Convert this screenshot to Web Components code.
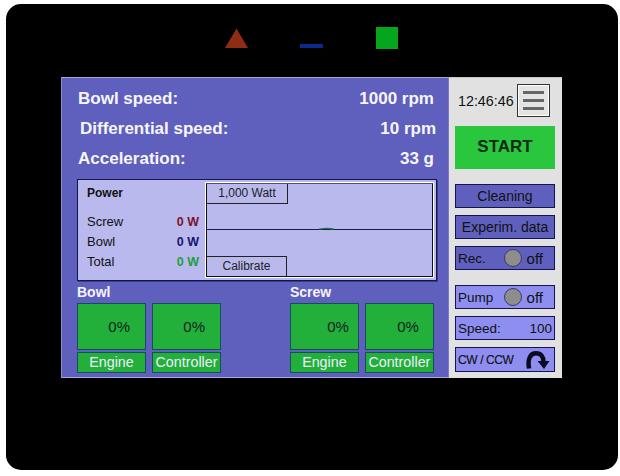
<!DOCTYPE html>
<html><head><meta charset="utf-8"><style>
html,body{margin:0;padding:0;background:#fff;overflow:hidden;font-family:"Liberation Sans",Arial,sans-serif}
</style></head><body>
<hmi-device>
  <hmi-led slot="leds" shape="triangle"></hmi-led>
  <hmi-led slot="leds" shape="dash"></hmi-led>
  <hmi-led slot="leds" shape="square"></hmi-led>
  <hmi-readout style="--l:16px;--r:14px;--h:30px" label="Bowl speed:" value="1000 rpm"></hmi-readout>
  <hmi-readout style="--l:18px;--r:12px;--h:30px" label="Differential speed:" value="10 rpm"></hmi-readout>
  <hmi-readout style="--l:16px;--r:14px;--h:30px" label="Acceleration:" value="33 g"></hmi-readout>
  <hmi-power></hmi-power>
  <hmi-group slot="groups" title="Bowl" pad="15" pad2="15" style="--gx:15px;--w:199px"></hmi-group>
  <hmi-group slot="groups" title="Screw" pad="9" pad2="14" style="--gx:15px;--w:159px"></hmi-group>
  <hmi-side slot="side"></hmi-side>
</hmi-device>
<script>
function def(name,css,html){
  customElements.define(name,class extends HTMLElement{
    connectedCallback(){
      if(this.shadowRoot)return;
      const r=this.attachShadow({mode:"open"});
      r.innerHTML="<style>"+css+"</style>"+html;
    }
  });
}
def("hmi-device",`
:host{display:block;box-sizing:border-box;width:612px;height:466px;margin:4px 0 6px 6px;background:#000;border-radius:15px;color:#fff;font-family:"Liberation Sans",Arial,sans-serif}
.leds{display:flex;height:73px;box-sizing:border-box;padding:23px 0 0 219px;align-items:flex-start}
.screen{display:flex;margin-left:55px;width:501px;height:301px;background:#e1e1e1;box-shadow:inset 0 1px 0 #c8c8c8}
.main{width:388px;box-sizing:border-box;background:#5f5fbd;padding-top:6px;border-top:1px solid #a9a9d6;border-left:1px solid #8d8dd0;border-bottom:1px solid #a9a9d6;border-right:1px solid #7a7ac0}
.groups{display:flex}
`,`<div class="leds"><slot name="leds"></slot></div>
<div class="screen"><div class="main"><slot></slot><div class="groups"><slot name="groups"></slot></div></div><slot name="side"></slot></div>`);

customElements.define("hmi-led",class extends HTMLElement{
  connectedCallback(){
    if(this.shadowRoot)return;
    const s=this.getAttribute("shape");
    const svg={triangle:'<svg width="75" height="23" viewBox="0 0 75 23"><path d="M11.500 1.500L23 21H0Z" fill="#8f2c14"/></svg>',
      dash:'<svg width="76" height="23" viewBox="0 0 76 23"><rect y="17" width="23" height="4" fill="#0c2a8c"/></svg>',
      square:'<svg width="23" height="23" viewBox="0 0 23 23"><rect width="22" height="22" fill="#06a51e"/></svg>'}[s];
    this.attachShadow({mode:"open"}).innerHTML='<style>:host{display:block;line-height:0}</style>'+svg;
  }
});

customElements.define("hmi-readout",class extends HTMLElement{
  connectedCallback(){
    if(this.shadowRoot)return;
    this.attachShadow({mode:"open"}).innerHTML=`<style>
:host{display:flex;justify-content:space-between;align-items:center;height:var(--h);padding:0 var(--r) 0 var(--l);font:bold 17px "Liberation Sans",Arial,sans-serif;color:#f6f6fb}
</style><span>${this.getAttribute("label")}</span><span>${this.getAttribute("value")}</span>`;
  }
});

def("hmi-power",`
:host{display:flex;box-sizing:border-box;width:360px;height:102px;margin:5px 0 0 15px;background:#b9b9ee;border:1px solid #14144e;box-shadow:1px 1px 0 #3c3c84;color:#111;font:13px "Liberation Sans",Arial,sans-serif;padding:3px}
.list{width:125px;box-sizing:border-box;padding:3px 7px 0 6px}
.t{font:bold 12px "Liberation Sans",Arial,sans-serif;height:22px;line-height:14px;margin-bottom:4px}
.r{display:flex;justify-content:space-between;height:20px;line-height:20px}
.r b{font-size:12.500px}
.chart{position:relative;flex:1;box-sizing:border-box;border:1px solid #111;border-top-color:#555;outline:1px solid #fff;display:flex;flex-direction:column;justify-content:space-between;align-items:flex-start}
.btn{box-sizing:border-box;width:81px;height:20px;line-height:19px;text-align:center;font-size:12px;border:1px solid #222;border-left:0;color:#222}
.top{border-top:0}.bot{border-bottom:0;width:80px}
svg{position:absolute;left:0;top:42px}
`,`<div class="list"><div class="t">Power</div>
<div class="r"><span>Screw</span><b style="color:#7d1426">0 W</b></div>
<div class="r"><span>Bowl</span><b style="color:#15156e">0 W</b></div>
<div class="r"><span>Total</span><b style="color:#1f9e42">0 W</b></div></div>
<div class="chart"><div class="btn top">1,000 Watt</div>
<svg width="226" height="6" viewBox="0 0 226 6"><path d="M0 3.500H226" stroke="#1a1a50"/><path d="M112 3.200Q120 1.600 127 3.200" stroke="#1d7a55" stroke-width="1.200" fill="none"/></svg>
<div class="btn bot">Calibrate</div></div>`);

customElements.define("hmi-group",class extends HTMLElement{
  connectedCallback(){
    if(this.shadowRoot)return;
    const pad=this.getAttribute("pad"),pad2=this.getAttribute("pad2");
    this.attachShadow({mode:"open"}).innerHTML=`<style>
:host{display:block;box-sizing:border-box;margin-left:var(--gx);padding-top:4px;width:var(--w)}
.h{font:bold 14px "Liberation Sans",Arial,sans-serif;height:18px;line-height:15px;color:#f4f4fb}
.c{display:grid;grid-template-columns:69px 69px;column-gap:6px;row-gap:2px}
.g,.n{box-sizing:border-box;background:#22b03a;border:1px solid #14505a}
.g{height:47px;line-height:45px;text-align:right;padding-right:${pad2}px;font-size:15px;color:#122}
.g.f{padding-right:${pad}px}
.n{height:21px;line-height:19px;text-align:center;font-size:14.300px;color:#eef}
</style><div class="h">${this.getAttribute("title")}</div>
<div class="c"><div class="g f">0%</div><div class="g">0%</div><div class="n">Engine</div><div class="n">Controller</div></div>`;
  }
});

def("hmi-side",`
:host{display:block;box-sizing:border-box;width:113px;padding:7px 7px 0 6px;color:#111;font:14px "Liberation Sans",Arial,sans-serif}
.top{display:flex;align-items:center;justify-content:space-between;height:33px;padding:0 5px 0 3px}
.time{font-size:14.300px}
.menu{box-sizing:border-box;width:33px;height:33px;border:1px solid #333;background:#e4e4e4;box-shadow:inset 0 0 0 1px #fff;display:flex;flex-direction:column;justify-content:center;gap:5px;padding:0 5px}
.menu i{display:block;height:3px;background:#666}
.start{box-sizing:border-box;height:43px;margin-top:9px;background:#2ac63e;line-height:41px;text-align:center;font-weight:bold;font-size:17px;color:#102a14}
.b{box-sizing:border-box;border:1px solid #14144e;height:24px;display:flex;align-items:center;justify-content:space-between;padding:0 2px;background:#5f5fbd;color:#111}
.s{font-size:13.500px}
.c{justify-content:center}
.l{background:#8e8ef0}
.dot{width:18px;height:18px;box-sizing:border-box;border-radius:50%;background:#8d8d8d;border:1px solid #3a3a6a}
.sw{display:flex;align-items:center;gap:5px;margin-right:9px;font-size:15px}
`,`<div class="top"><span class="time">12:46:46</span><div class="menu"><i></i><i></i><i></i></div></div>
<div class="start">START</div>
<div class="b c" style="margin-top:15px">Cleaning</div>
<div class="b c" style="margin-top:7px">Experim. data</div>
<div class="b s" style="margin-top:7px"><span>Rec.</span><span class="sw"><span class="dot"></span>off</span></div>
<div class="b l s" style="margin-top:15px"><span>Pump</span><span class="sw"><span class="dot"></span>off</span></div>
<div class="b l s" style="margin-top:7px"><span>Speed:</span><span>100</span></div>
<div class="b l" style="margin-top:7px;height:25px"><span style="font-size:12px;letter-spacing:-.4px;-webkit-text-stroke:.15px #111">CW / CCW</span>
<svg width="24" height="18" viewBox="0 0 24 18" style="margin-right:2px"><path d="M3 17.500C1.500 8 4 2.300 10 2.300C15 2.300 17.500 6 17.500 11" fill="none" stroke="#0a0a24" stroke-width="4.500"/><path d="M11.500 10H23.500L18 18Z" fill="#0a0a24"/></svg></div>`);
</script>
</body></html>
